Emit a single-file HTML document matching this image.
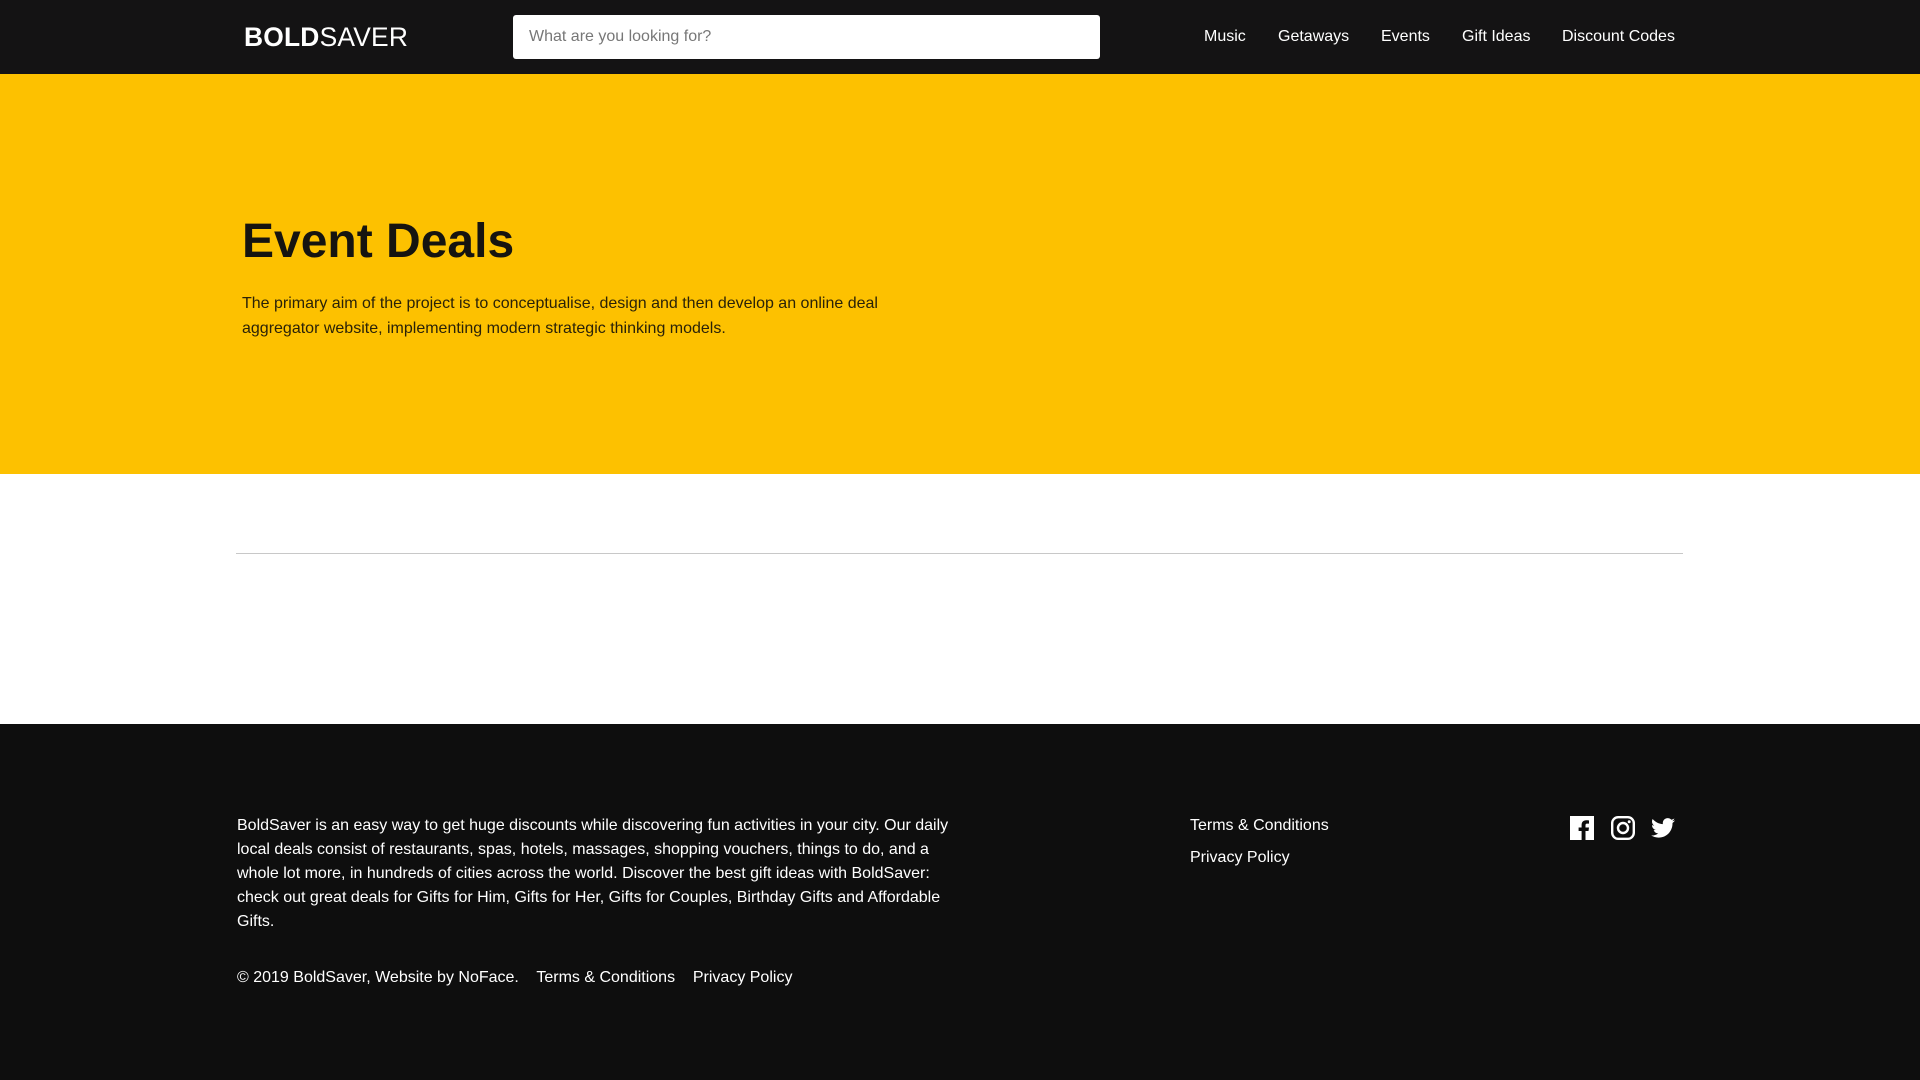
<!DOCTYPE html>
<html><head><meta charset="utf-8"><style>
*{margin:0;padding:0;box-sizing:border-box}
body{width:1920px;height:1080px;font-family:"Liberation Sans",Arial,sans-serif;background:#fff;position:relative;overflow:hidden}
.hdr{position:absolute;left:0;top:0;width:1920px;height:74px;background:#141314}
.logo{position:absolute;left:244px;top:22px;font-size:26.4px;color:#fff;letter-spacing:0.2px}
.logo b{font-weight:700}
.search{position:absolute;left:513px;top:15px;width:587px;height:44px;background:#fff;border-radius:3px;color:#777;font-size:16px;line-height:44px;padding-left:16px}
.nav{position:absolute;top:28px;font-size:16px;color:#fff}
.hero{position:absolute;left:0;top:74px;width:1920px;height:400px;background:#fdc100}
h1{position:absolute;left:242px;top:214px;font-size:48px;font-weight:700;color:#161410}
.lead{position:absolute;left:242px;top:292px;width:660px;font-size:16px;line-height:24.5px;color:#2a2208}
.rule{position:absolute;left:236px;top:553px;width:1447px;height:1px;background:#c8c8c8}
.ftr{position:absolute;left:0;top:724px;width:1920px;height:356px;background:#0e0e0e;color:#fff}
.ftxt{position:absolute;left:237px;top:90px;width:720px;font-size:16px;line-height:24px}
.copy{position:absolute;left:237px;top:245px;font-size:16px}
.fl{position:absolute;left:1190px;font-size:16px}
.ic{position:absolute;top:92px}
</style></head><body>
<div class="hdr">
<div class="logo"><b>BOLD</b>SAVER</div>
<div class="search">What are you looking for?</div>
<div class="nav" style="left:1204px">Music</div>
<div class="nav" style="left:1278px">Getaways</div>
<div class="nav" style="left:1381px">Events</div>
<div class="nav" style="left:1462px">Gift Ideas</div>
<div class="nav" style="left:1562px">Discount Codes</div>
</div>
<div class="hero"></div>
<h1>Event Deals</h1>
<div class="lead">The primary aim of the project is to conceptualise, design and then develop an online deal aggregator website, implementing modern strategic thinking models.</div>
<div class="rule"></div>
<div class="ftr">
<div class="ftxt">BoldSaver is an easy way to get huge discounts while discovering fun activities in your city. Our daily local deals consist of restaurants, spas, hotels, massages, shopping vouchers, things to do, and a whole lot more, in hundreds of cities across the world. Discover the best gift ideas with BoldSaver: check out great deals for Gifts for Him, Gifts for Her, Gifts for Couples, Birthday Gifts and Affordable Gifts.</div>
<div class="copy">© 2019 BoldSaver, Website by NoFace.&nbsp;&nbsp;&nbsp; Terms &amp; Conditions&nbsp;&nbsp;&nbsp; Privacy Policy</div>
<div class="fl" style="top:93px">Terms &amp; Conditions</div>
<div class="fl" style="top:125px">Privacy Policy</div>
<svg class="ic" style="left:1570px" width="24" height="24" viewBox="0 0 24 24"><path fill="#fff" d="M0 0h24v24h-8.5v-9h3l.5-3.5h-3.5V9.3c0-1 .3-1.7 1.8-1.7H19V4.5c-.4 0-1.5-.2-2.8-.2-2.8 0-4.6 1.7-4.6 4.8v2.4H8.6V15h3v9H0z"/></svg>
<svg class="ic" style="left:1611px" width="24" height="24" viewBox="0 0 24 24"><rect x="1.2" y="1.2" width="21.6" height="21.6" rx="6" fill="none" stroke="#fff" stroke-width="2.4"/><circle cx="12" cy="12" r="5" fill="none" stroke="#fff" stroke-width="2.4"/><circle cx="18.2" cy="5.8" r="1.5" fill="#fff"/></svg>
<svg class="ic" style="left:1651px;top:93px" width="24" height="22" viewBox="0 0 24 20"><path fill="#fff" d="M24 2.4c-.9.4-1.8.6-2.8.8 1-.6 1.8-1.6 2.2-2.7-1 .6-2 1-3.1 1.2C19.4.7 18.1.1 16.7.1c-2.7 0-4.9 2.2-4.9 4.9 0 .4 0 .8.1 1.1C7.8 5.9 4.2 4 1.7 1 1.3 1.7 1 2.6 1 3.5c0 1.7.9 3.2 2.2 4.1-.8 0-1.6-.2-2.2-.6v.1c0 2.4 1.7 4.4 3.9 4.8-.4.1-.8.2-1.3.2-.3 0-.6 0-.9-.1.6 2 2.4 3.4 4.6 3.4-1.7 1.3-3.8 2.1-6.1 2.1-.4 0-.8 0-1.2-.1 2.2 1.4 4.8 2.2 7.5 2.2 9.1 0 14-7.5 14-14v-.6c1-.7 1.8-1.6 2.5-2.6z"/></svg>
</div>
</body></html>
